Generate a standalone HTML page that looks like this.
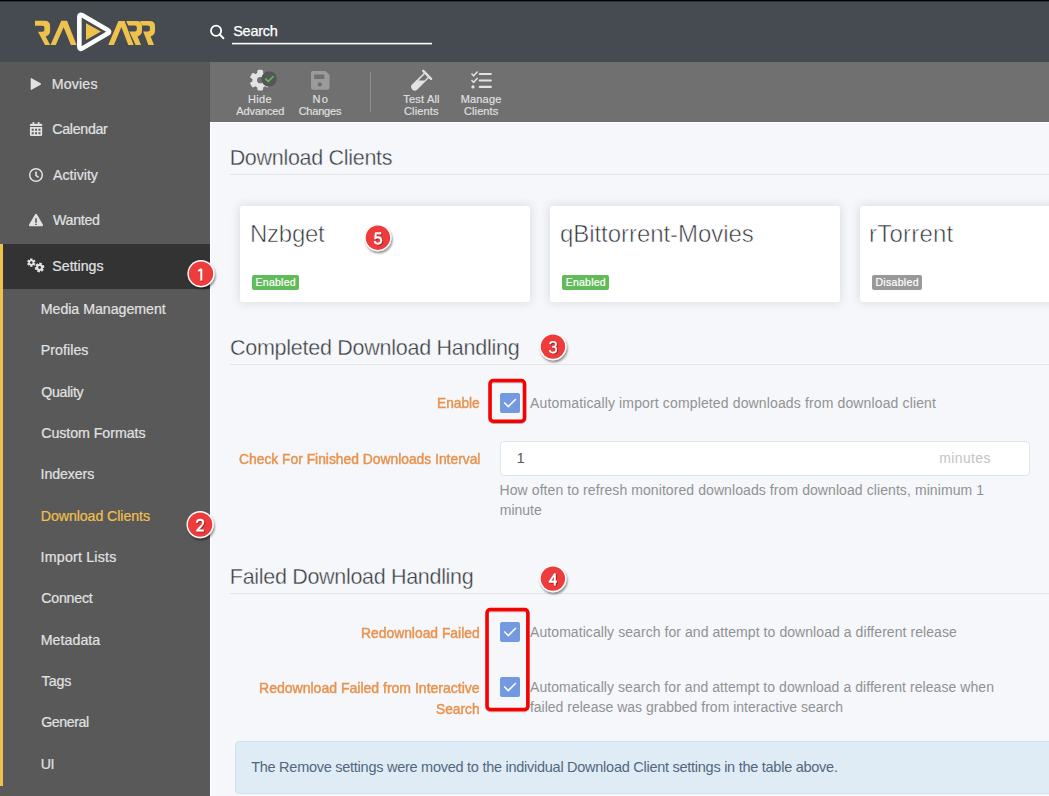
<!DOCTYPE html>
<html><head><meta charset="utf-8">
<style>
html,body{margin:0;padding:0;}
body{width:1049px;height:796px;overflow:hidden;position:relative;background:#f5f7fa;font-family:"Liberation Sans",sans-serif;}
.a{position:absolute;}
.t{position:absolute;white-space:nowrap;}
.bm{display:inline-block;width:0;height:0;}
.card{position:absolute;background:#fff;border-radius:3px;box-shadow:0 0 10px 1px #dcdde0;}
.lbl{position:absolute;border-radius:2px;height:15px;}
.hl{position:absolute;height:1px;background:#e5e5e5;left:230px;width:819px;}
.cb{position:absolute;width:20px;height:20px;border-radius:2px;background:#7399e1;}
.badge{position:absolute;width:24px;height:24px;border-radius:50%;background:#ee3a3a;border:1.6px solid #fff;box-shadow:1px 2px 2px rgba(0,0,0,.35);}
.rb{position:absolute;border:3px solid #f20000;border-radius:5px;box-shadow:0 1px 2px rgba(0,0,0,.25);}
</style></head><body>
<!-- header -->
<div class="a" style="left:0;top:0;width:1049px;height:62px;background:#464b51;"></div>
<div class="a" style="left:0;top:0;width:1049px;height:1px;background:#000;"></div>
<div class="a" style="left:0;top:1px;width:1049px;height:1px;background:#2c2f33;"></div>
<svg class="a" style="left:0;top:0" width="210" height="62" viewBox="0 0 210 62">
 <g fill="#eec24c">
  <path d="M35,20.8 L44.6,20.8 Q50.1,20.8 50.1,26.3 L50.1,30.6 Q50.1,35.2 45.7,36.6 L50.1,45.1 L45,45.1 L38,31.8 L42.4,31.8 Q44.4,31.8 44.4,29.8 L44.4,27.8 Q44.4,25.8 42.4,25.8 L35,25.8 Z"/>
  <path d="M50.5,45.1 L61.3,20.8 L67,20.8 L76.6,45.1 L70.9,45.1 L63.6,27.2 L55.8,45.1 Z"/>
  <path d="M86,23.3 L101,31.6 L86,40 Z"/>
  <path d="M108.3,45.1 L118.4,21 L124.6,21 L133.6,45.1 L128.3,45.1 L121.4,27 L113.9,45.1 Z"/>
  <path d="M126.2,21 L136.6,21 Q142,21 142,26.4 L142,30.6 Q142,35 137.6,36.4 L141,45.1 L135.6,45.1 L129.3,31.6 L134.8,31.6 Q136.8,31.6 136.8,29.6 L136.8,27.6 Q136.8,25.6 134.8,25.6 L128.2,25.6 Z"/>
  <path d="M140.2,21 L149.6,21 Q155,21 155,26.4 L155,30.6 Q155,35 150.6,36.4 L154,45.1 L148.4,45.1 L143.2,31.6 L147.9,31.6 Q149.9,31.6 149.9,29.6 L149.9,27.6 Q149.9,25.6 147.9,25.6 L142.2,25.6 Z"/>
 </g>
 <path d="M82.29,15.31 L107.66,30.09 Q110.60,31.80 107.67,33.52 L82.28,48.38 Q79.35,50.10 79.35,46.70 L79.35,17.00 Q79.35,13.60 82.29,15.31 Z" fill="none" stroke="#fff" stroke-width="4.6" stroke-linejoin="round"/>
</svg>
<svg class="a" style="left:200px;top:15px" width="40" height="40" viewBox="200 15 40 40">
 <circle cx="216.1" cy="30.7" r="5.1" fill="none" stroke="#fff" stroke-width="1.8"/>
 <line x1="219.9" y1="34.6" x2="223.4" y2="38.2" stroke="#fff" stroke-width="2" stroke-linecap="round"/>
</svg>
<svg class="a" style="left:210px;top:0" width="230" height="62"><rect x="22" y="42.8" width="200" height="1.6" fill="#fff"/></svg>

<!-- sidebar -->
<div class="a" style="left:0;top:62px;width:210px;height:734px;background:#595959;"></div>
<div class="a" style="left:0;top:244px;width:210px;height:45px;background:#333333;"></div>
<div class="a" style="left:0;top:244px;width:3px;height:542px;background:#eec24c;"></div>
<svg class="a" style="left:0;top:0" width="60" height="300" viewBox="0 0 60 300">
 <g fill="#e1e2e3">
  <path d="M31.6,78.2 L40.6,83.2 Q41.6,84 40.6,84.8 L31.6,89.8 Q30.7,90.3 30.7,89.2 L30.7,78.8 Q30.7,77.7 31.6,78.2 Z"/>
  <!-- calendar -->
  <rect x="32.6" y="122" width="1.7" height="3" rx="0.6"/>
  <rect x="37.8" y="122" width="1.7" height="3" rx="0.6"/>
  <path d="M31,123.8 H41.1 Q42.2,123.8 42.2,124.9 V126 H29.9 V124.9 Q29.9,123.8 31,123.8 Z"/>
  <path d="M29.9,127.1 H42.2 V134.8 Q42.2,135.9 41.1,135.9 H31 Q29.9,135.9 29.9,134.8 Z M31.7,128.7 v2 h2 v-2 Z M35.1,128.7 v2 h2 v-2 Z M38.5,128.7 v2 h2 v-2 Z M31.7,132.2 v2 h2 v-2 Z M35.1,132.2 v2 h2 v-2 Z M38.5,132.2 v2 h2 v-2 Z" fill-rule="evenodd"/>
  <!-- warning -->
  <path d="M35,214.4 Q36,212.9 37,214.4 L42.9,224.6 Q43.7,226.2 42,226.2 L30,226.2 Q28.3,226.2 29.1,224.6 Z M35.2,218.2 V222.8 H36.8 V218.2 Z M35.2,223.8 V225.1 H36.8 V223.8 Z" fill-rule="evenodd"/>
  <path d="M30.09,259.85 L30.05,258.38 L32.55,258.38 L32.51,259.85 L33.08,260.18 L34.33,259.41 L35.58,261.57 L34.28,262.27 L34.28,262.93 L35.58,263.63 L34.33,265.79 L33.08,265.02 L32.51,265.35 L32.55,266.82 L30.05,266.82 L30.09,265.35 L29.52,265.02 L28.27,265.79 L27.02,263.63 L28.32,262.93 L28.32,262.27 L27.02,261.57 L28.27,259.41 L29.52,260.18 Z M30.00,262.60 a1.3,1.3 0 1,0 2.6,0 a1.3,1.3 0 1,0 -2.6,0 Z" fill-rule="evenodd"/>
  <path d="M39.08,264.14 L39.46,262.60 L42.15,263.32 L41.72,264.84 L42.25,265.37 L43.77,264.93 L44.50,267.62 L42.96,268.01 L42.77,268.73 L43.91,269.83 L41.95,271.80 L40.84,270.67 L40.12,270.86 L39.74,272.40 L37.05,271.68 L37.48,270.16 L36.95,269.63 L35.43,270.07 L34.70,267.38 L36.24,266.99 L36.43,266.27 L35.29,265.17 L37.25,263.20 L38.36,264.33 Z M38.20,267.50 a1.4,1.4 0 1,0 2.8,0 a1.4,1.4 0 1,0 -2.8,0 Z" fill-rule="evenodd"/>
 </g>
 <circle cx="36" cy="175" r="6.3" fill="none" stroke="#e1e2e3" stroke-width="1.5"/>
 <path d="M36,171.6 V175.4 L38.6,177.3" fill="none" stroke="#e1e2e3" stroke-width="1.6"/>
</svg>

<!-- toolbar -->
<div class="a" style="left:210px;top:62px;width:839px;height:60px;background:#707070;"></div>
<div class="a" style="left:209px;top:62px;width:1px;height:60px;background:#555;"></div>
<div class="a" style="left:210px;top:122px;width:839px;height:1px;background:#fff;"></div>
<div class="a" style="left:210px;top:122px;width:1px;height:674px;background:#fff;"></div>
<div class="a" style="left:370px;top:72px;width:1px;height:40px;background:#8f8f8f;"></div>
<svg class="a" style="left:210px;top:62px" width="300" height="60" viewBox="210 62 300 60">
 <g fill="#e1e2e3"><circle cx="260.2" cy="80.2" r="7.7"/><rect x="257.30" y="69.80" width="5.8" height="6" rx="1.6" transform="rotate(0 260.2 80.2)"/><rect x="257.30" y="69.80" width="5.8" height="6" rx="1.6" transform="rotate(60 260.2 80.2)"/><rect x="257.30" y="69.80" width="5.8" height="6" rx="1.6" transform="rotate(120 260.2 80.2)"/><rect x="257.30" y="69.80" width="5.8" height="6" rx="1.6" transform="rotate(180 260.2 80.2)"/><rect x="257.30" y="69.80" width="5.8" height="6" rx="1.6" transform="rotate(240 260.2 80.2)"/><rect x="257.30" y="69.80" width="5.8" height="6" rx="1.6" transform="rotate(300 260.2 80.2)"/></g><circle cx="260.2" cy="80.2" r="3.1" fill="#707070"/>
 <circle cx="269.1" cy="79" r="7.8" fill="#565656"/>
 <path d="M265.3,78.4 L268.2,81.5 L273.5,76.2" fill="none" stroke="#5cb85c" stroke-width="1.7"/>
 <!-- floppy -->
 <path d="M313,70.9 H325.5 L329.5,74.9 V87.7 Q329.5,89.7 327.5,89.7 H313 Q311,89.7 311,87.7 V72.9 Q311,70.9 313,70.9 Z M314.1,74.5 V78.9 H324.4 V74.5 Z M319.8,82.6 a2,2 0 1,0 0.01,0 Z" fill="#9b9b9b" fill-rule="evenodd"/>
 <circle cx="319.8" cy="84.6" r="2" fill="#707070"/>
 <!-- test tube -->
 <path d="M423.85,72.95 L428.95,78.05 L417.35,89.45 A3.6,3.6 0 0,1 412.25,84.35 Z" fill="#e1e2e3"/>
 <path d="M424.9,74.0 L427.9,77.0 L424.5,80.4 L418.5,80.4 Z" fill="#707070"/>
 <path d="M423.2,70.9 L431.1,78.8" stroke="#e1e2e3" stroke-width="2.4" stroke-linecap="round"/>
 <!-- list check -->
 <g stroke="#e1e2e3" fill="none">
  <path d="M471.5,73.6 L473.6,75.8 L477.6,71.6" stroke-width="1.5"/>
  <path d="M471.5,80.1 L473.6,82.3 L477.6,78.1" stroke-width="1.5"/>
  <path d="M479.8,74 H490.8 M479.8,80.5 H490.8 M479.8,86.9 H490.8" stroke-width="2.2" stroke-linecap="round"/>
 </g>
 <circle cx="473" cy="86.9" r="1.6" fill="#e1e2e3"/>
</svg>

<!-- content -->
<div class="hl" style="top:174px;"></div>
<div class="hl" style="top:364px;"></div>
<div class="hl" style="top:593px;"></div>
<div class="card" style="left:240px;top:206px;width:290px;height:96px;"></div>
<div class="card" style="left:550px;top:206px;width:290px;height:96px;"></div>
<div class="card" style="left:860px;top:206px;width:290px;height:96px;"></div>
<div class="lbl" style="left:252px;top:275px;width:47px;background:#62bb5a;"></div>
<div class="lbl" style="left:562px;top:275px;width:47px;background:#62bb5a;"></div>
<div class="lbl" style="left:872px;top:275px;width:50px;background:#999999;"></div>

<!-- input -->
<div class="a" style="left:500px;top:441px;width:528px;height:33px;background:#fff;border:1px solid #dde6e9;border-radius:4px;"></div>

<!-- checkboxes -->
<svg class="a" style="left:0;top:0" width="1049" height="796">
 <g>
  <rect x="500" y="393" width="20" height="20" rx="2" fill="#7399e1"/>
  <rect x="500" y="622" width="20" height="20" rx="2" fill="#7399e1"/>
  <rect x="500" y="677" width="20" height="20" rx="2" fill="#7399e1"/>
 </g>
 <g fill="none" stroke="#fff" stroke-width="1.5">
  <path d="M504.2,402.4 L508.3,406.6 L515.9,399"/>
  <path d="M504.2,631.4 L508.3,635.6 L515.9,628"/>
  <path d="M504.2,686.4 L508.3,690.6 L515.9,683"/>
 </g>
</svg>

<!-- info box -->
<div class="a" style="left:235px;top:741px;width:900px;height:51px;background:#e0ecf5;border:1px solid #c6e5ef;border-radius:4px;"></div>

<div class="t" id="t0" style="left:233.14px;top:23.00px;font-size:14.5px;line-height:16.20px;letter-spacing:-0.229px;color:#ffffff;font-weight:normal;-webkit-text-stroke:0.25px #fff;">Search<span class="bm"></span></div>
<div class="t" id="t1" style="left:51.84px;top:77.01px;font-size:14.2px;line-height:15.86px;letter-spacing:0.148px;color:#e1e2e3;font-weight:normal;-webkit-text-stroke:0.2px #e1e2e3;">Movies<span class="bm"></span></div>
<div class="t" id="t2" style="left:52.28px;top:122.01px;font-size:14.2px;line-height:15.86px;letter-spacing:-0.288px;color:#e1e2e3;font-weight:normal;-webkit-text-stroke:0.2px #e1e2e3;">Calendar<span class="bm"></span></div>
<div class="t" id="t3" style="left:52.97px;top:168.01px;font-size:14.2px;line-height:15.86px;letter-spacing:0.003px;color:#e1e2e3;font-weight:normal;-webkit-text-stroke:0.2px #e1e2e3;">Activity<span class="bm"></span></div>
<div class="t" id="t4" style="left:52.94px;top:213.01px;font-size:14.2px;line-height:15.86px;letter-spacing:-0.258px;color:#e1e2e3;font-weight:normal;-webkit-text-stroke:0.2px #e1e2e3;">Wanted<span class="bm"></span></div>
<div class="t" id="t5" style="left:52.36px;top:259.00px;font-size:14.2px;line-height:15.86px;letter-spacing:-0.015px;color:#e1e2e3;font-weight:normal;-webkit-text-stroke:0.2px #e1e2e3;">Settings<span class="bm"></span></div>
<div class="t" id="t6" style="left:40.74px;top:302.00px;font-size:14.2px;line-height:15.86px;letter-spacing:-0.028px;color:#e1e2e3;font-weight:normal;-webkit-text-stroke:0.2px #e1e2e3;">Media Management<span class="bm"></span></div>
<div class="t" id="t7" style="left:40.74px;top:343.00px;font-size:14.2px;line-height:15.86px;letter-spacing:0.053px;color:#e1e2e3;font-weight:normal;-webkit-text-stroke:0.2px #e1e2e3;">Profiles<span class="bm"></span></div>
<div class="t" id="t8" style="left:41.23px;top:385.00px;font-size:14.2px;line-height:15.86px;letter-spacing:-0.276px;color:#e1e2e3;font-weight:normal;-webkit-text-stroke:0.2px #e1e2e3;">Quality<span class="bm"></span></div>
<div class="t" id="t9" style="left:41.18px;top:426.00px;font-size:14.2px;line-height:15.86px;letter-spacing:-0.039px;color:#e1e2e3;font-weight:normal;-webkit-text-stroke:0.2px #e1e2e3;">Custom Formats<span class="bm"></span></div>
<div class="t" id="t10" style="left:40.59px;top:467.01px;font-size:14.2px;line-height:15.86px;letter-spacing:-0.099px;color:#e1e2e3;font-weight:normal;-webkit-text-stroke:0.2px #e1e2e3;">Indexers<span class="bm"></span></div>
<div class="t" id="t11" style="left:40.74px;top:509.01px;font-size:14.2px;line-height:15.86px;letter-spacing:-0.075px;color:#f0c04c;font-weight:normal;-webkit-text-stroke:0.2px #f0c04c;">Download Clients<span class="bm"></span></div>
<div class="t" id="t12" style="left:40.59px;top:550.01px;font-size:14.2px;line-height:15.86px;letter-spacing:0.218px;color:#e1e2e3;font-weight:normal;-webkit-text-stroke:0.2px #e1e2e3;">Import Lists<span class="bm"></span></div>
<div class="t" id="t13" style="left:41.18px;top:591.01px;font-size:14.2px;line-height:15.86px;letter-spacing:-0.203px;color:#e1e2e3;font-weight:normal;-webkit-text-stroke:0.2px #e1e2e3;">Connect<span class="bm"></span></div>
<div class="t" id="t14" style="left:40.74px;top:633.01px;font-size:14.2px;line-height:15.86px;letter-spacing:0.044px;color:#e1e2e3;font-weight:normal;-webkit-text-stroke:0.2px #e1e2e3;">Metadata<span class="bm"></span></div>
<div class="t" id="t15" style="left:41.58px;top:674.00px;font-size:14.2px;line-height:15.86px;letter-spacing:-0.045px;color:#e1e2e3;font-weight:normal;-webkit-text-stroke:0.2px #e1e2e3;">Tags<span class="bm"></span></div>
<div class="t" id="t16" style="left:41.19px;top:715.00px;font-size:14.2px;line-height:15.86px;letter-spacing:-0.435px;color:#e1e2e3;font-weight:normal;-webkit-text-stroke:0.2px #e1e2e3;">General<span class="bm"></span></div>
<div class="t" id="t17" style="left:40.80px;top:757.00px;font-size:14.2px;line-height:15.86px;letter-spacing:-0.582px;color:#e1e2e3;font-weight:normal;-webkit-text-stroke:0.2px #e1e2e3;">UI<span class="bm"></span></div>
<div class="t" id="t18" style="left:247.95px;top:93.01px;font-size:11px;line-height:12.29px;letter-spacing:0.356px;color:#e1e2e3;font-weight:normal;-webkit-text-stroke:0.15px #e1e2e3;">Hide<span class="bm"></span></div>
<div class="t" id="t19" style="left:236.23px;top:105.02px;font-size:11px;line-height:12.29px;letter-spacing:-0.099px;color:#e1e2e3;font-weight:normal;-webkit-text-stroke:0.15px #e1e2e3;">Advanced<span class="bm"></span></div>
<div class="t" id="t20" style="left:312.60px;top:93.01px;font-size:11px;line-height:12.29px;letter-spacing:1.103px;color:#e1e2e3;font-weight:normal;-webkit-text-stroke:0.15px #e1e2e3;">No<span class="bm"></span></div>
<div class="t" id="t21" style="left:298.64px;top:105.02px;font-size:11px;line-height:12.29px;letter-spacing:-0.213px;color:#e1e2e3;font-weight:normal;-webkit-text-stroke:0.15px #e1e2e3;">Changes<span class="bm"></span></div>
<div class="t" id="t22" style="left:403.35px;top:93.01px;font-size:11px;line-height:12.29px;letter-spacing:0.190px;color:#e1e2e3;font-weight:normal;-webkit-text-stroke:0.15px #e1e2e3;">Test All<span class="bm"></span></div>
<div class="t" id="t23" style="left:404.04px;top:105.02px;font-size:11px;line-height:12.29px;letter-spacing:0.122px;color:#e1e2e3;font-weight:normal;-webkit-text-stroke:0.15px #e1e2e3;">Clients<span class="bm"></span></div>
<div class="t" id="t24" style="left:460.65px;top:93.01px;font-size:11px;line-height:12.29px;letter-spacing:0.188px;color:#e1e2e3;font-weight:normal;-webkit-text-stroke:0.15px #e1e2e3;">Manage<span class="bm"></span></div>
<div class="t" id="t25" style="left:463.94px;top:105.02px;font-size:11px;line-height:12.29px;letter-spacing:0.122px;color:#e1e2e3;font-weight:normal;-webkit-text-stroke:0.15px #e1e2e3;">Clients<span class="bm"></span></div>
<div class="t" id="t26" style="left:229.64px;top:146.01px;font-size:21.5px;line-height:24.02px;letter-spacing:-0.298px;color:#3a3d42;font-weight:normal;-webkit-text-stroke:0.35px #f5f7fa;">Download Clients<span class="bm"></span></div>
<div class="t" id="t27" style="left:230.01px;top:336.00px;font-size:21.5px;line-height:24.02px;letter-spacing:-0.262px;color:#3a3d42;font-weight:normal;-webkit-text-stroke:0.35px #f5f7fa;">Completed Download Handling<span class="bm"></span></div>
<div class="t" id="t28" style="left:229.84px;top:565.02px;font-size:21.5px;line-height:24.02px;letter-spacing:-0.310px;color:#3a3d42;font-weight:normal;-webkit-text-stroke:0.35px #f5f7fa;">Failed Download Handling<span class="bm"></span></div>
<div class="t" id="t29" style="left:249.93px;top:221.01px;font-size:24px;line-height:26.81px;letter-spacing:-0.240px;color:#2f3238;font-weight:normal;-webkit-text-stroke:0.6px #fff;">Nzbget<span class="bm"></span></div>
<div class="t" id="t30" style="left:559.89px;top:221.00px;font-size:24px;line-height:26.81px;letter-spacing:-0.044px;color:#2f3238;font-weight:normal;-webkit-text-stroke:0.6px #fff;">qBittorrent-Movies<span class="bm"></span></div>
<div class="t" id="t31" style="left:869.11px;top:221.00px;font-size:24px;line-height:26.81px;letter-spacing:0.197px;color:#2f3238;font-weight:normal;-webkit-text-stroke:0.6px #fff;">rTorrent<span class="bm"></span></div>
<div class="t" id="t32" style="left:437.07px;top:395.00px;font-size:14.5px;line-height:16.20px;letter-spacing:0.000px;color:#e8924e;font-weight:normal;transform:scaleX(0.9465);transform-origin:0 0;-webkit-text-stroke:0.45px #e8924e;">Enable<span class="bm"></span></div>
<div class="t" id="t33" style="left:238.70px;top:451.01px;font-size:14.5px;line-height:16.20px;letter-spacing:0.000px;color:#e8924e;font-weight:normal;transform:scaleX(0.9540);transform-origin:0 0;-webkit-text-stroke:0.45px #e8924e;">Check For Finished Downloads Interval<span class="bm"></span></div>
<div class="t" id="t34" style="left:361.46px;top:625.01px;font-size:14.5px;line-height:16.20px;letter-spacing:0.000px;color:#e8924e;font-weight:normal;transform:scaleX(0.9557);transform-origin:0 0;-webkit-text-stroke:0.45px #e8924e;">Redownload Failed<span class="bm"></span></div>
<div class="t" id="t35" style="left:259.15px;top:680.01px;font-size:14.5px;line-height:16.20px;letter-spacing:0.000px;color:#e8924e;font-weight:normal;transform:scaleX(0.9675);transform-origin:0 0;-webkit-text-stroke:0.45px #e8924e;">Redownload Failed from Interactive<span class="bm"></span></div>
<div class="t" id="t36" style="left:436.47px;top:701.01px;font-size:14.5px;line-height:16.20px;letter-spacing:0.000px;color:#e8924e;font-weight:normal;transform:scaleX(0.9494);transform-origin:0 0;-webkit-text-stroke:0.45px #e8924e;">Search<span class="bm"></span></div>
<div class="t" id="t37" style="left:530.07px;top:396.01px;font-size:14px;line-height:15.64px;letter-spacing:0.137px;color:#909293;font-weight:normal;">Automatically import completed downloads from download client<span class="bm"></span></div>
<div class="t" id="t38" style="left:499.55px;top:483.00px;font-size:14px;line-height:15.64px;letter-spacing:0.082px;color:#909293;font-weight:normal;">How often to refresh monitored downloads from download clients, minimum 1<span class="bm"></span></div>
<div class="t" id="t39" style="left:499.77px;top:503.01px;font-size:14px;line-height:15.64px;letter-spacing:0.000px;color:#909293;font-weight:normal;">minute<span class="bm"></span></div>
<div class="t" id="t40" style="left:530.07px;top:625.01px;font-size:14px;line-height:15.64px;letter-spacing:0.066px;color:#909293;font-weight:normal;">Automatically search for and attempt to download a different release<span class="bm"></span></div>
<div class="t" id="t41" style="left:530.07px;top:680.00px;font-size:14px;line-height:15.64px;letter-spacing:0.058px;color:#909293;font-weight:normal;">Automatically search for and attempt to download a different release when<span class="bm"></span></div>
<div class="t" id="t42" style="left:529.90px;top:700.00px;font-size:14px;line-height:15.64px;letter-spacing:0.006px;color:#909293;font-weight:normal;">failed release was grabbed from interactive search<span class="bm"></span></div>
<div class="t" id="t43" style="left:516.63px;top:451.01px;font-size:14px;line-height:15.64px;letter-spacing:0.000px;color:#555555;font-weight:normal;">1<span class="bm"></span></div>
<div class="t" id="t44" style="left:939.37px;top:451.00px;font-size:14px;line-height:15.64px;letter-spacing:0.336px;color:#c4c4c4;font-weight:normal;">minutes<span class="bm"></span></div>
<div class="t" id="t45" style="left:251.17px;top:759.01px;font-size:14.5px;line-height:16.20px;letter-spacing:-0.263px;color:#52677d;font-weight:normal;">The Remove settings were moved to the individual Download Client settings in the table above.<span class="bm"></span></div>
<div class="t" id="t46" style="left:255.54px;top:277.00px;font-size:10.5px;line-height:11.73px;letter-spacing:0.251px;color:#ffffff;font-weight:normal;-webkit-text-stroke:0.2px #fff;">Enabled<span class="bm"></span></div>
<div class="t" id="t47" style="left:565.64px;top:277.00px;font-size:10.5px;line-height:11.73px;letter-spacing:0.251px;color:#ffffff;font-weight:normal;-webkit-text-stroke:0.2px #fff;">Enabled<span class="bm"></span></div>
<div class="t" id="t48" style="left:875.44px;top:277.00px;font-size:10.5px;line-height:11.73px;letter-spacing:0.312px;color:#ffffff;font-weight:normal;-webkit-text-stroke:0.2px #fff;">Disabled<span class="bm"></span></div>

<!-- red highlight boxes -->
<svg class="a" style="left:0;top:0" width="1049" height="796">
 <defs><filter id="rs" x="-20%" y="-20%" width="140%" height="140%"><feGaussianBlur in="SourceAlpha" stdDeviation="0.7"/><feOffset dx="0" dy="1"/><feComponentTransfer><feFuncA type="linear" slope="0.3"/></feComponentTransfer><feMerge><feMergeNode/><feMergeNode in="SourceGraphic"/></feMerge></filter></defs>
 <g fill="none" stroke="#f70000" stroke-width="3.5" filter="url(#rs)">
  <rect x="490.05" y="380.55" width="34.5" height="40.7" rx="3.2"/>
  <rect x="487.05" y="609.55" width="40.8" height="100" rx="3.2"/>
 </g>
</svg>


<!-- badges -->
<svg class="a" style="left:0;top:0" width="1049" height="796">
 <defs><filter id="ds" x="-30%" y="-30%" width="160%" height="160%"><feGaussianBlur in="SourceAlpha" stdDeviation="1"/><feOffset dx="0.6" dy="1.6"/><feComponentTransfer><feFuncA type="linear" slope="0.45"/></feComponentTransfer><feMerge><feMergeNode/><feMergeNode in="SourceGraphic"/></feMerge></filter><filter id="dsl" x="-50%" y="-50%" width="200%" height="200%"><feGaussianBlur in="SourceAlpha" stdDeviation="0.4"/><feOffset dx="0.5" dy="0.9"/><feComponentTransfer><feFuncA type="linear" slope="0.4"/></feComponentTransfer><feMerge><feMergeNode/><feMergeNode in="SourceGraphic"/></feMerge></filter></defs>
 <g filter="url(#ds)"><circle cx="201" cy="273.7" r="13.6" fill="#fff"/><circle cx="201" cy="273.7" r="12.2" fill="#ee3a3a"/></g><g filter="url(#ds)"><circle cx="200.1" cy="524.6" r="13.6" fill="#fff"/><circle cx="200.1" cy="524.6" r="12.2" fill="#ee3a3a"/></g><g filter="url(#ds)"><circle cx="553" cy="346.6" r="13.6" fill="#fff"/><circle cx="553" cy="346.6" r="12.2" fill="#ee3a3a"/></g><g filter="url(#ds)"><circle cx="552.9" cy="578.6" r="13.6" fill="#fff"/><circle cx="552.9" cy="578.6" r="12.2" fill="#ee3a3a"/></g><g filter="url(#ds)"><circle cx="377.9" cy="237.7" r="13.6" fill="#fff"/><circle cx="377.9" cy="237.7" r="12.2" fill="#ee3a3a"/></g><path filter="url(#dsl)" transform="translate(197.00,268.20)" d="M4.3,0.6 V12.3 M4.3,0.7 L1.2,2.9" fill="none" stroke="#fff" stroke-width="1.9" stroke-linejoin="round"/><path filter="url(#dsl)" transform="translate(196.10,519.10)" d="M0.8,3.7 C0.8,1.7 2.2,0.6 4,0.6 C5.9,0.6 7.1,1.8 7.1,3.4 C7.1,4.6 6.5,5.5 5.5,6.6 L1,11.4 H7.7" fill="none" stroke="#fff" stroke-width="1.9" stroke-linejoin="round"/><path filter="url(#dsl)" transform="translate(549.00,341.10)" d="M0.9,3 C1.1,1.5 2.4,0.6 4,0.6 C5.8,0.6 7,1.6 7,3.2 C7,4.7 5.8,5.7 4,5.7 H3.1 M4,5.7 C6,5.7 7.3,6.8 7.3,8.6 C7.3,10.5 5.9,11.5 4,11.5 C2.2,11.5 0.8,10.5 0.7,8.9" fill="none" stroke="#fff" stroke-width="1.55" stroke-linejoin="round"/><path filter="url(#dsl)" transform="translate(548.90,573.10)" d="M5.9,12.3 V0.9 L0.7,8.7 H7.9" fill="none" stroke="#fff" stroke-width="1.9" stroke-linejoin="round"/><path filter="url(#dsl)" transform="translate(373.90,232.20)" d="M7.2,1 H1.9 L1.2,6.2 C1.9,5.5 2.9,5.1 4,5.1 C6,5.1 7.3,6.6 7.3,8.4 C7.3,10.3 6,11.5 4,11.5 C2.3,11.5 1,10.6 0.8,9" fill="none" stroke="#fff" stroke-width="1.9" stroke-linejoin="round"/>
</svg>

</body></html>
